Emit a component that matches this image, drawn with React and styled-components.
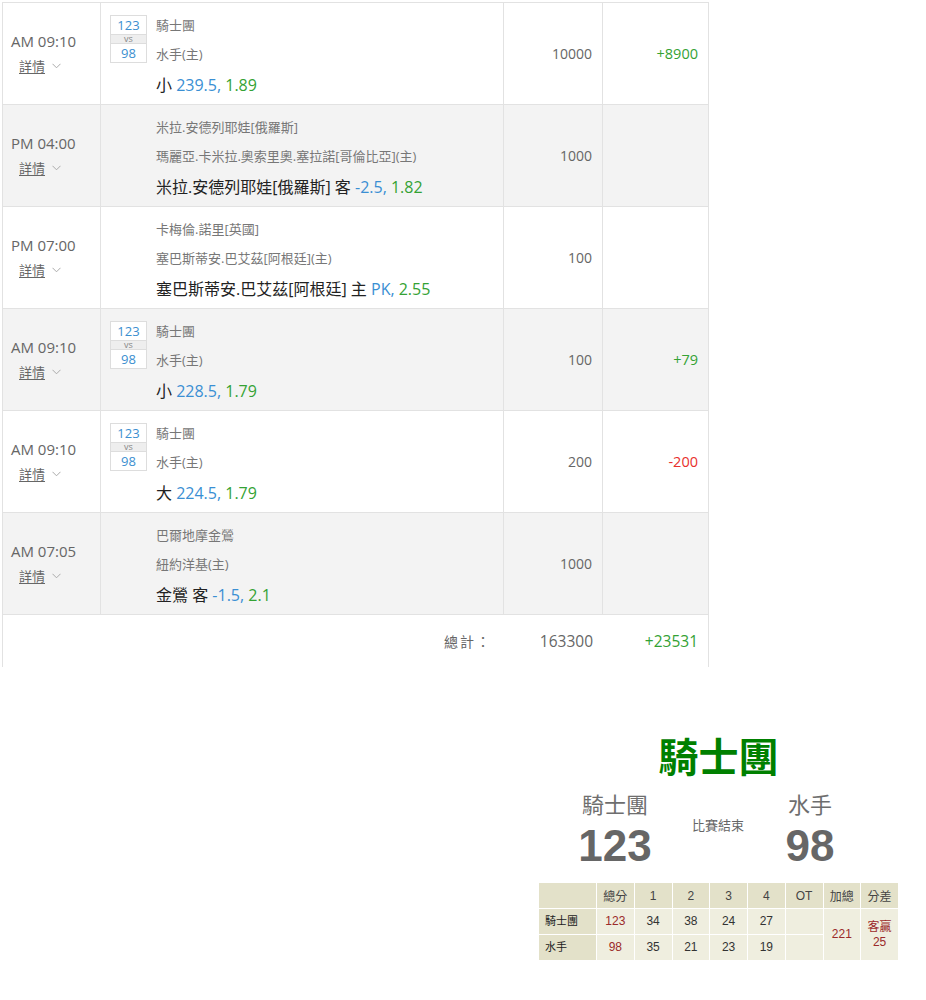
import React from 'react';
import styled, {createGlobalStyle} from 'styled-components';

const GlobalStyle = createGlobalStyle`
	body {
		margin: 0;
		background: #fff;
		font-family: "Open Sans", "Noto Sans CJK TC", sans-serif;
	}
`;

const bets = [
	{time: 'AM 09:10', score: [123, 98], home: '騎士團', away: '水手(主)', pick: '小', line: '239.5', odds: '1.89', amount: '10000', result: '+8900'},
	{time: 'PM 04:00', home: '米拉.安德列耶娃[俄羅斯]', away: '瑪麗亞.卡米拉.奧索里奧.塞拉諾[哥倫比亞](主)', pick: '米拉.安德列耶娃[俄羅斯] 客', line: '-2.5', odds: '1.82', amount: '1000'},
	{time: 'PM 07:00', home: '卡梅倫.諾里[英國]', away: '塞巴斯蒂安.巴艾茲[阿根廷](主)', pick: '塞巴斯蒂安.巴艾茲[阿根廷] 主', line: 'PK', odds: '2.55', amount: '100'},
	{time: 'AM 09:10', score: [123, 98], home: '騎士團', away: '水手(主)', pick: '小', line: '228.5', odds: '1.79', amount: '100', result: '+79'},
	{time: 'AM 09:10', score: [123, 98], home: '騎士團', away: '水手(主)', pick: '大', line: '224.5', odds: '1.79', amount: '200', result: '-200'},
	{time: 'AM 07:05', home: '巴爾地摩金鶯', away: '紐約洋基(主)', pick: '金鶯 客', line: '-1.5', odds: '2.1', amount: '1000'},
];

const quarters = [
	{team: '騎士團', total: 123, q: [34, 38, 24, 27]},
	{team: '水手', total: 98, q: [35, 21, 23, 19]},
];

const Chevron = () => (
	<svg width="9" height="6" viewBox="0 0 9 6">
		<path d="M0.5 0.8 L4.5 4.8 L8.5 0.8" fill="none" stroke="#aaa" strokeWidth="1"/>
	</svg>
);

export default function App() {
	return (
		<>
			<GlobalStyle/>
			<Table>
				{bets.map((bet, i) => (
					<Row key={i} $shaded={i % 2 === 1}>
						<TimeCell>
							<Time>{bet.time}</Time>
							<Detail><DetailLink>詳情</DetailLink><Chevron/></Detail>
						</TimeCell>
						<MatchCell>
							<ScoreSlot>
								{bet.score && (
									<ScoreBox>
										<ScoreNum>{bet.score[0]}</ScoreNum>
										<Vs>vs</Vs>
										<ScoreNum>{bet.score[1]}</ScoreNum>
									</ScoreBox>
								)}
							</ScoreSlot>
							<Teams>
								<TeamName>{bet.home}</TeamName>
								<TeamName>{bet.away}</TeamName>
								<Pick>
									{bet.pick} <Blue>{bet.line},</Blue> <Green>{bet.odds}</Green>
								</Pick>
							</Teams>
						</MatchCell>
						<AmountCell>{bet.amount}</AmountCell>
						<ResultCell $loss={bet.result && bet.result.startsWith('-')}>{bet.result}</ResultCell>
					</Row>
				))}
				<TotalRow>
					<TotalLabel>總計：</TotalLabel>
					<TotalAmount>163300</TotalAmount>
					<TotalResult>+23531</TotalResult>
				</TotalRow>
			</Table>

			<Widget>
				<Winner>騎士團</Winner>
				<Matchup>
					<Side>
						<SideName>騎士團</SideName>
						<SideScore>123</SideScore>
					</Side>
					<Status>比賽結束</Status>
					<Side>
						<SideName>水手</SideName>
						<SideScore>98</SideScore>
					</Side>
				</Matchup>
				<Board>
					<thead>
						<tr>
							<Th/>
							<Th>總分</Th>
							<Th>1</Th>
							<Th>2</Th>
							<Th>3</Th>
							<Th>4</Th>
							<Th>OT</Th>
							<Th>加總</Th>
							<Th>分差</Th>
						</tr>
					</thead>
					<tbody>
						{quarters.map((t, i) => (
							<tr key={t.team}>
								<TeamTd>{t.team}</TeamTd>
								<Td $red>{t.total}</Td>
								{t.q.map((s, j) => <Td key={j}>{s}</Td>)}
								<Td/>
								{i === 0 && <Td rowSpan={2} $red>221</Td>}
								{i === 0 && <Td rowSpan={2} $red>客贏<br/>25</Td>}
							</tr>
						))}
					</tbody>
				</Board>
			</Widget>
		</>
	);
}

const Table = styled.div`
	margin: 2px 0 0 2px;
	width: 707px;
	box-sizing: border-box;
	border-top: 1px solid #e2e2e2;
	border-left: 1px solid #e2e2e2;
	border-right: 1px solid #e2e2e2;
`;

const Row = styled.div`
	display: grid;
	grid-template-columns: 98px 403px 99px 105px;
	height: 102px;
	box-sizing: border-box;
	border-bottom: 1px solid #e2e2e2;
	background: ${p => p.$shaded ? '#f3f3f3' : '#fff'};
`;

const Cell = styled.div`
	box-sizing: border-box;
	border-right: 1px solid #e2e2e2;
`;

const TimeCell = styled(Cell)`
	display: flex;
	flex-direction: column;
	justify-content: center;
	padding: 0 0 2px 8px;
	gap: 6px;
`;

const Time = styled.div`
	font-size: 15px;
	color: #666;
	line-height: 20px;
`;

const Detail = styled.div`
	display: flex;
	align-items: center;
	gap: 7px;
	padding-left: 8px;
	line-height: 18px;
`;

const DetailLink = styled.span`
	font-size: 13px;
	color: #666;
	text-decoration: underline;
	text-underline-offset: 2px;
`;

const MatchCell = styled(Cell)`
	display: flex;
	padding: 8px 0 0 9px;
`;

const ScoreSlot = styled.div`
	width: 46px;
	flex: none;
`;

const ScoreBox = styled.div`
	width: 37px;
	box-sizing: border-box;
	border: 1px solid #ddd;
	background: #fff;
	display: flex;
	flex-direction: column;
	margin-top: 4px;
`;

const ScoreNum = styled.div`
	height: 18px;
	line-height: 18px;
	text-align: center;
	font-size: 13px;
	color: #3b8fd0;
`;

const Vs = styled.div`
	height: 10px;
	box-sizing: border-box;
	line-height: 8px;
	text-align: center;
	font-size: 9px;
	color: #888;
	background: #eee;
	border-top: 1px solid #ddd;
	border-bottom: 1px solid #ddd;
`;

const Teams = styled.div`
	display: flex;
	flex-direction: column;
`;

const TeamName = styled.div`
	font-size: 13px;
	line-height: 29px;
	color: #777;
	white-space: nowrap;
`;

const Pick = styled.div`
	padding-top: 1px;
	font-size: 16px;
	line-height: 30px;
	color: #222;
	white-space: nowrap;
`;

const Blue = styled.span`
	color: #3a8fd3;
`;

const Green = styled.span`
	color: #34a234;
`;

const AmountCell = styled(Cell)`
	display: flex;
	align-items: center;
	justify-content: flex-end;
	padding-right: 10px;
	font-size: 14px;
	color: #666;
`;

const ResultCell = styled.div`
	display: flex;
	align-items: center;
	justify-content: flex-end;
	padding-right: 10px;
	font-size: 14.5px;
	color: ${p => p.$loss ? '#e8302c' : '#34a234'};
`;

const TotalRow = styled.div`
	display: grid;
	grid-template-columns: 98px 403px 99px 105px;
	height: 52px;
	align-items: center;
	font-size: 15.5px;
`;

const TotalLabel = styled.div`
	grid-column: 1 / 3;
	text-align: right;
	padding-right: 12px;
	color: #666;
	font-size: 14px;
	letter-spacing: 2px;
`;

const TotalAmount = styled.div`
	text-align: right;
	padding-right: 10px;
	color: #666;
`;

const TotalResult = styled.div`
	text-align: right;
	padding-right: 10px;
	color: #34a234;
`;

const Widget = styled.div`
	margin: 67px 0 0 538px;
	width: 361px;
	font-family: "Liberation Sans", "Noto Sans CJK TC", sans-serif;
	display: flex;
	flex-direction: column;
	align-items: center;
`;

const Winner = styled.div`
	font-size: 40px;
	font-weight: bold;
	line-height: 48px;
	color: #008000;
`;

const Matchup = styled.div`
	display: grid;
	grid-template-columns: 154px 52px 132px;
	align-self: flex-start;
	margin-top: 10px;
`;

const Side = styled.div`
	display: flex;
	flex-direction: column;
	align-items: center;
	color: #666;
`;

const SideName = styled.div`
	font-size: 22px;
	line-height: 28px;
	color: #6e6e6e;
`;

const SideScore = styled.div`
	margin-top: 3px;
	font-size: 44px;
	font-weight: bold;
	line-height: 46px;
`;

const Status = styled.div`
	display: flex;
	justify-content: center;
	white-space: nowrap;
	padding-top: 23px;
	font-size: 13px;
	color: #666;
`;

const Board = styled.table`
	margin-top: 13px;
	width: 361px;
	border-collapse: collapse;
	border: 1px solid #d2d2d2;
	font-size: 12px;
	table-layout: fixed;
	& th:first-child { width: 57px; }
`;

const Th = styled.th`
	height: 25px;
	padding: 0;
	font-weight: normal;
	color: #444;
	background: #e3e1c9;
	border: 1px solid #fff;
	text-align: center;
`;

const Td = styled.td`
	height: 25px;
	padding: 0;
	text-align: center;
	background: #efeedf;
	border: 1px solid #fff;
	color: ${p => p.$red ? '#9b2a2a' : '#333'};
	line-height: 15px;
`;

const TeamTd = styled(Td)`
	text-align: left;
	padding-left: 6px;
	background: #e3e1c9;
	color: #222;
	font-size: 11px;
`;
